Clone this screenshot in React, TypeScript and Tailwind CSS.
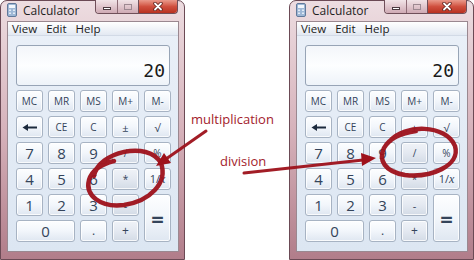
const ui = "font-['Open_Sans','Noto_Sans',sans-serif]";

function CalcIcon() {
  return (
    <svg width="10" height="14" viewBox="0 0 10 14">
      <rect x="0.5" y="0.5" width="9" height="13" rx="1.5" fill="#9fb8d6" stroke="#61799a" />
      <rect x="2" y="2" width="6" height="3" fill="#f1f6fc" />
      <rect x="2" y="6.5" width="2" height="1.5" fill="#e3ecf6" />
      <rect x="6" y="6.5" width="2" height="1.5" fill="#e3ecf6" />
      <rect x="2" y="9.5" width="2" height="1.5" fill="#e3ecf6" />
      <rect x="6" y="9.5" width="2" height="1.5" fill="#e3ecf6" />
    </svg>
  );
}

function Controls() {
  return (
    <div className="ml-auto mr-[6px] -mt-px flex h-[14px] rounded-b-[4px] border border-t-0 border-[#6f4f59] overflow-hidden">
      <div className="w-[22px] flex items-center justify-center bg-gradient-to-b from-[#f1e4e7] to-[#cfaab4] border-r border-[#8d6b75]">
        <div className="mt-[4px] w-[8px] h-[3px] bg-white border border-[#4a3a40]" />
      </div>
      <div className="w-[21px] flex items-center justify-center bg-gradient-to-b from-[#f1e4e7] to-[#cfaab4] border-r border-[#6f4f59]">
        <div className="w-[8px] h-[6px] border border-[#9d8991] bg-transparent" />
      </div>
      <div className="w-[38px] flex items-center justify-center bg-gradient-to-b from-[#e99a8c] via-[#d0503f] to-[#b8301f]">
        <svg width="10" height="9" viewBox="0 0 10 9">
          <path d="M2 1.5 L8 7.5 M8 1.5 L2 7.5" stroke="#5a1d18" strokeWidth="3.4" strokeLinecap="round" />
          <path d="M2 1.5 L8 7.5 M8 1.5 L2 7.5" stroke="#ffffff" strokeWidth="1.8" strokeLinecap="round" />
        </svg>
      </div>
    </div>
  );
}

function BackArrow() {
  return (
    <svg width="16" height="7" viewBox="0 0 16 7">
      <path d="M5 3.5 H15" stroke="#1c2a3d" strokeWidth="2" />
      <path d="M0.5 3.5 L6 0 L6 7 Z" fill="#1c2a3d" />
    </svg>
  );
}

const btnBase =
  "flex items-center justify-center rounded-[3px] border border-[#a7b3c3] text-[#34445a] shadow-[inset_0_0_0_1px_rgba(255,255,255,0.8)]";
const btnNum = btnBase + " bg-gradient-to-b from-[#fdfeff] via-[#f2f6fb] to-[#dfe7f1]";
const btnOp = btnBase + " bg-gradient-to-b from-[#f0f3f8] via-[#e4e9f1] to-[#d3dbe6]";

type B = { label: React.ReactNode; op?: boolean; cls?: string; size?: string };

const keys: B[] = [
  { label: "MC", size: "text-[10px]" },
  { label: "MR", size: "text-[10px]" },
  { label: "MS", size: "text-[10px]" },
  { label: "M+", size: "text-[10px]" },
  { label: "M-", size: "text-[10px]" },
  { label: <BackArrow /> },
  { label: "CE", size: "text-[10px]" },
  { label: "C", size: "text-[10px]" },
  { label: "±", size: "text-[11px]" },
  { label: "√", size: "text-[11px]" },
  { label: "7", size: "text-[15px]" },
  { label: "8", size: "text-[15px]" },
  { label: "9", size: "text-[15px]" },
  { label: "/", op: true, size: "text-[10px]" },
  { label: "%", size: "text-[10px]" },
  { label: "4", size: "text-[15px]" },
  { label: "5", size: "text-[15px]" },
  { label: "6", size: "text-[15px]" },
  { label: "*", op: true, size: "text-[10px]" },
  {
    label: (
      <span>
        1/<span className="italic font-['Liberation_Serif',serif] text-[12px]">x</span>
      </span>
    ),
    size: "text-[11px]",
  },
  { label: "1", size: "text-[15px]" },
  { label: "2", size: "text-[15px]" },
  { label: "3", size: "text-[15px]" },
  { label: "-", op: true, size: "text-[11px]" },
  { label: "=", cls: "row-span-2", size: "text-[22px] font-bold" },
  { label: "0", cls: "col-span-2", size: "text-[15px]" },
  { label: ".", size: "text-[12px]" },
  { label: "+", op: true, size: "text-[12px]" },
];

function Window() {
  return (
    <div className="w-[185px] h-[260px] shrink-0 flex flex-col rounded-t-[7px] border border-[#6b4a55] bg-gradient-to-b from-[#eddde1] via-[#d6b2bb] to-[#b17d8a]">
      <div className="h-[20px] flex items-start">
        <div className="ml-[6px] mt-[2px]">
          <CalcIcon />
        </div>
        <div className={`${ui} ml-[6px] mt-[2px] text-[12px] leading-[15px] text-[#1e1e1e]`}>Calculator</div>
        <Controls />
      </div>
      <div className="ml-[6px] mr-[5px] flex-1 mb-[7px] border border-[#9a8890] flex flex-col bg-gradient-to-b from-[#eaf0f8] to-[#dce6f2]">
        <div
          className={`${ui} h-[14px] flex items-center gap-[9px] pl-[4px] text-[11.5px] leading-none text-[#1b1b1b] bg-gradient-to-b from-white to-[#e3e9f2] border-b border-[#d2dae6]`}
        >
          <span>View</span>
          <span>Edit</span>
          <span>Help</span>
        </div>
        <div className="mt-[9px] mx-[8px] h-[41px] rounded-[3px] border border-[#97a4b6] bg-gradient-to-b from-[#f3f6fa] via-[#fdfeff] to-[#eef3f9] flex items-end justify-end pr-[4px] pb-[5px]">
          <span className="font-['DejaVu_Sans_Mono','Liberation_Mono',monospace] text-[18px] leading-none text-[#1a1a1a]">20</span>
        </div>
        <div className={`${ui} mt-[4px] mx-[8px] grid grid-cols-[repeat(5,27px)] grid-rows-[repeat(6,22px)] gap-x-[5px] gap-y-[4px]`}>
          {keys.map((k, i) => (
            <div key={i} className={`${k.op ? btnOp : btnNum} ${k.cls ?? ""} ${k.size ?? ""} leading-none`}>
              {k.label}
            </div>
          ))}
        </div>
      </div>
    </div>
  );
}

export default function App() {
  const red = "#9e111b";
  return (
    <div className="relative w-[474px] h-[260px] overflow-hidden bg-white flex">
      <Window />
      <div className={`${ui} flex-1 flex flex-col text-[13px] leading-[16px] text-[#a3212c]`}>
        <div className="mt-[111px] pl-[6px] whitespace-nowrap">multiplication</div>
        <div className="mt-[26px] pl-[35px] whitespace-nowrap">division</div>
      </div>
      <Window />

      {/* annotations */}
      <svg className="absolute inset-0 pointer-events-none" width="474" height="260" viewBox="0 0 474 260">
        <g fill="none" stroke={red} strokeWidth="4.5" strokeLinecap="round" opacity="0.95">
          <path d="M94 176 C98 152, 148 140, 161 163 C168 183, 150 201, 124 205 C100 208, 85 195, 89 180 C92 170, 102 164, 114 161" />
          <path d="M390 141 C404 124, 446 124, 455 146 C461 166, 430 178, 405 175 C385 172, 378 160, 384 148 C389 139, 401 133, 416 131" />
          <path d="M206 131 L166 159" strokeWidth="3" />
          <path d="M244 173 L363 160" strokeWidth="3" />
        </g>
        <path d="M156 166 L171 163 L164 153 Z" fill={red} />
        <path d="M376 158 L362 166 L361 153 Z" fill={red} />
      </svg>
    </div>
  );
}
